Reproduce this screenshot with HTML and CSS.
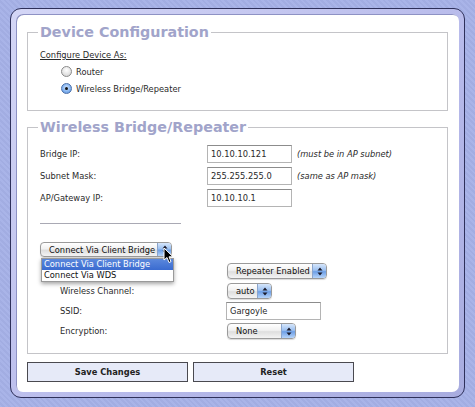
FILE: index.html
```html
<!DOCTYPE html>
<html>
<head>
<meta charset="utf-8">
<link rel="stylesheet" href="styles.css">
</head>
<body>
<div class="frame">
  <div class="panel">
    <fieldset class="box box-device">
      <legend>Device Configuration</legend>
      <div class="heading">Configure Device As:</div>
      <div class="radio-row"><span class="radio"></span><span>Router</span></div>
      <div class="radio-row"><span class="radio checked"></span><span>Wireless Bridge/Repeater</span></div>
    </fieldset>

    <fieldset class="box box-bridge">
      <legend>Wireless Bridge/Repeater</legend>
      <div class="row">
        <span class="label">Bridge IP:</span>
        <span class="input w84">10.10.10.121</span>
        <span class="note">(must be in AP subnet)</span>
      </div>
      <div class="row">
        <span class="label">Subnet Mask:</span>
        <span class="input w84">255.255.255.0</span>
        <span class="note">(same as AP mask)</span>
      </div>
      <div class="row">
        <span class="label">AP/Gateway IP:</span>
        <span class="input w84">10.10.10.1</span>
      </div>
      <div class="divider"></div>

      <div class="mode">
        <div class="select w132"><span class="sel-text">Connect Via Client Bridge</span><span class="arrows"><svg width="6" height="9" viewBox="0 0 6 9"><path d="M3 0.5 L5.5 3.5 H0.5 Z M3 8.5 L5.5 5.5 H0.5 Z" fill="#1a1a2a"/></svg></span></div>
        <div class="popup">
          <div class="opt selected">Connect Via Client Bridge</div>
          <div class="opt">Connect Via WDS</div>
        </div>
        <svg class="cursor" width="11" height="17" viewBox="0 0 11 17"><path d="M1 1 L1 13 L4 10.5 L6 15.5 L8 14.6 L6 9.8 L10 9.8 Z" fill="#000" stroke="#fff" stroke-width="1"/></svg>
      </div>

      <div class="sub">
        <div class="subrow">
          <span class="label"></span>
          <div class="select w100"><span class="sel-text">Repeater Enabled</span><span class="arrows"><svg width="6" height="9" viewBox="0 0 6 9"><path d="M3 0.5 L5.5 3.5 H0.5 Z M3 8.5 L5.5 5.5 H0.5 Z" fill="#1a1a2a"/></svg></span></div>
        </div>
        <div class="subrow">
          <span class="label">Wireless Channel:</span>
          <div class="select w45"><span class="sel-text">auto</span><span class="arrows"><svg width="6" height="9" viewBox="0 0 6 9"><path d="M3 0.5 L5.5 3.5 H0.5 Z M3 8.5 L5.5 5.5 H0.5 Z" fill="#1a1a2a"/></svg></span></div>
        </div>
        <div class="subrow">
          <span class="label">SSID:</span>
          <span class="input w94 ssid">Gargoyle</span>
        </div>
        <div class="subrow">
          <span class="label">Encryption:</span>
          <div class="select w69"><span class="sel-text">None</span><span class="arrows"><svg width="6" height="9" viewBox="0 0 6 9"><path d="M3 0.5 L5.5 3.5 H0.5 Z M3 8.5 L5.5 5.5 H0.5 Z" fill="#1a1a2a"/></svg></span></div>
        </div>
      </div>
    </fieldset>

    <div class="buttons">
      <button class="btn">Save Changes</button>
      <button class="btn">Reset</button>
    </div>
  </div>
</div>
</body>
</html>
```
FILE: styles.css
```css
html, body {
  margin: 0;
  padding: 0;
}
body {
  width: 475px;
  height: 407px;
  overflow: hidden;
  background-color: #a7b2e6;
  background-image: repeating-linear-gradient(45deg, #a9b4e8 0 2px, #a2ade2 2px 4px);
  font-family: "DejaVu Sans", "Liberation Sans", sans-serif;
  font-size: 8.3px;
  color: #2a2a2a;
}
.frame {
  margin: 8px 10px 0 10px;
  border: 1px solid #2e305a;
  border-radius: 11px;
  background: linear-gradient(135deg, #d4d6f6, #b6b9ea 60%, #a8acdf);
  padding: 5px;
  box-sizing: border-box;
  height: 390px;
}
.panel {
  background: #fff;
  border-radius: 7px;
  height: 100%;
  box-sizing: border-box;
  padding: 10px 11px 0 11px;
  box-shadow: inset 1px 1px 0 #8e92c4;
}
.box {
  margin: 0;
  border: 1px solid #c4c4c8;
  padding: 0 12px;
  min-width: 0;
}
.box legend {
  font-weight: bold;
  font-size: 14.3px;
  line-height: 17px;
  color: #a1a4ca;
  padding: 0 2px;
  margin-left: -2px;
}
.box-device {
  padding-top: 8px;
  padding-bottom: 12px;
  height: 87px;
  box-sizing: border-box;
}
.heading {
  text-decoration: underline;
  line-height: 12px;
  height: 14px;
}
.radio-row {
  display: flex;
  align-items: center;
  height: 17px;
  padding-left: 21px;
  gap: 4px;
}
.radio {
  width: 9px;
  height: 9px;
  border-radius: 50%;
  border: 1px solid #8a8a8a;
  background: radial-gradient(circle at 50% 35%, #fff, #ddd 70%, #c8c8c8);
  box-sizing: content-box;
  display: inline-block;
  position: relative;
}
.radio.checked {
  border-color: #4a6fa8;
  background: radial-gradient(circle at 50% 40%, #cfe2fb, #7fb0ee 60%, #4f86d8);
}
.radio.checked::after {
  content: "";
  position: absolute;
  left: 3px;
  top: 3px;
  width: 3px;
  height: 3px;
  border-radius: 50%;
  background: #111;
}
.box-bridge {
  margin-top: 8px;
  padding-top: 9px;
  padding-bottom: 12px;
}
.row {
  display: flex;
  align-items: center;
  height: 18px;
  margin-bottom: 4px;
}
.label {
  width: 167px;
  flex: none;
}
.input {
  height: 18px;
  box-sizing: border-box;
  border: 1px solid #b4b4b4;
  border-top-color: #8c8c8c;
  padding: 0 3px;
  display: flex;
  align-items: center;
  background: #fff;
}
.w84 { width: 85px; }
.w94 { width: 95px; }
.ssid { margin-left: -1px; }
.note {
  font-style: italic;
  margin-left: 5px;
}
.divider {
  width: 141px;
  border-top: 1px solid #a9a9b4;
  margin-top: 16px;
  height: 0;
}
.mode {
  position: relative;
  margin-top: 18px;
  height: 15px;
}
.select {
  height: 15px;
  box-sizing: border-box;
  border: 1px solid #9a9a9a;
  border-radius: 4px;
  background: linear-gradient(#ffffff, #f1f1f1 45%, #dedede 55%, #f4f4f4);
  display: flex;
  align-items: center;
  overflow: hidden;
  box-shadow: 0 1px 1px rgba(0,0,0,0.15);
}
.sel-text {
  flex: 1;
  padding-left: 8px;
  white-space: nowrap;
  color: #111;
}
.arrows {
  width: 13px;
  height: 100%;
  flex: none;
  display: flex;
  align-items: center;
  justify-content: center;
  border-left: 1px solid #8aa4cc;
  background: linear-gradient(#d6e6fb, #9cc0f0 45%, #6d9fe6 55%, #b6d4fa);
}
.w132 { width: 132px; }
.w100 { width: 100px; }
.w45 { width: 45px; }
.w69 { width: 69px; }
.popup {
  position: absolute;
  left: 1px;
  top: 16px;
  width: 131px;
  background: #fff;
  border: 1px solid #9a9a9a;
  box-shadow: 0 2px 4px rgba(0,0,0,0.35);
  z-index: 5;
}
.opt {
  height: 11px;
  line-height: 11px;
  padding-left: 2px;
  white-space: nowrap;
  color: #111;
}
.opt.selected {
  background: linear-gradient(#5b88dc, #3a6bd0);
  color: #fff;
}
.cursor {
  position: absolute;
  left: 123px;
  top: 5px;
  z-index: 6;
}
.sub {
  margin-top: 4px;
  padding-left: 20px;
}
.subrow {
  display: flex;
  align-items: center;
  height: 20px;
}
.subrow .select { height: 16px; }
.buttons {
  display: flex;
  gap: 5px;
  margin-top: 8px;
}
.btn {
  width: 161px;
  height: 20px;
  margin: 0;
  border: 1px solid #4a4a50;
  background: #e6eaf8;
  font-family: "DejaVu Sans", "Liberation Sans", sans-serif;
  font-weight: bold;
  font-size: 8.3px;
  color: #222;
  padding: 0;
}
```
